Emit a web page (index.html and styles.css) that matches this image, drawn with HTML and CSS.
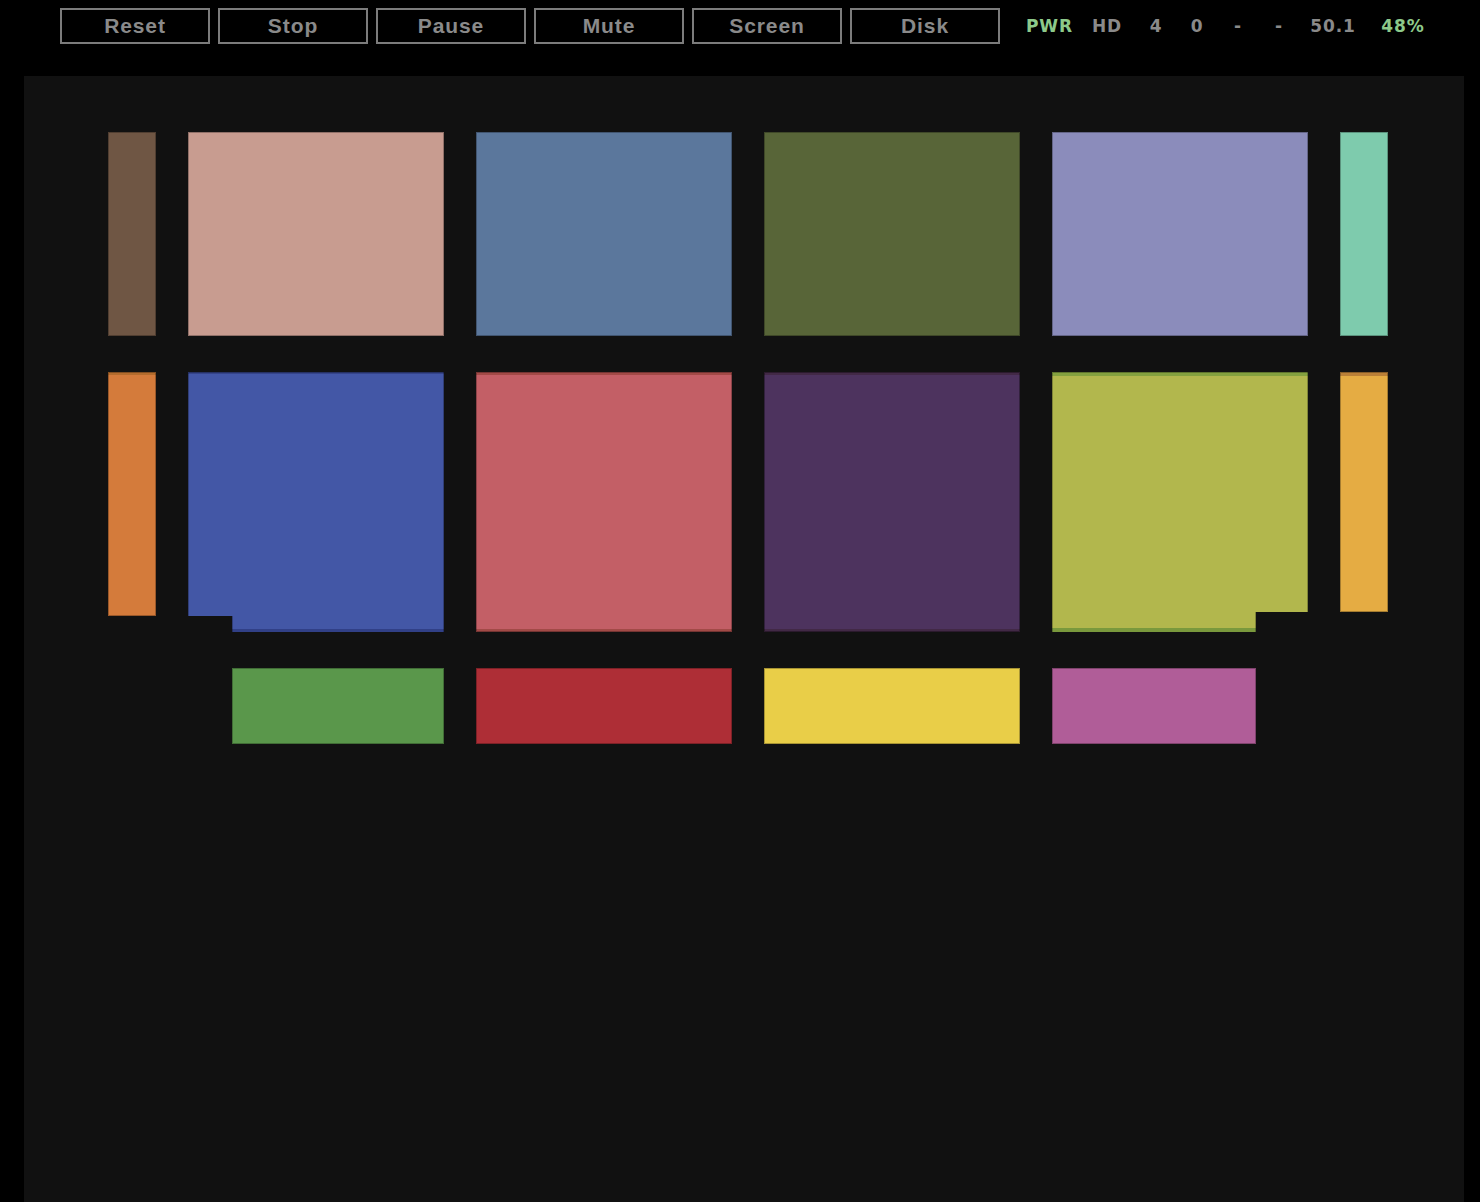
FILE: index.html
```html
<!DOCTYPE html>
<html lang="en">
<head>
<meta charset="utf-8">
<title>Console</title>
<link rel="stylesheet" href="styles.css">
</head>
<body>
<header class="topbar">
  <nav class="buttons">
    <button class="btn">Reset</button>
    <button class="btn">Stop</button>
    <button class="btn">Pause</button>
    <button class="btn">Mute</button>
    <button class="btn">Screen</button>
    <button class="btn">Disk</button>
  </nav>
  <div class="stats">
    <span class="stat w-pwr on">PWR</span>
    <span class="stat w-hd">HD</span>
    <span class="stat w-n1">4</span>
    <span class="stat w-n">0</span>
    <span class="stat w-n1">-</span>
    <span class="stat w-n">-</span>
    <span class="stat w-fps">50.1</span>
    <span class="stat w-pct on">48%</span>
  </div>
</header>
<main class="stage">
  <div class="keys">
    <div class="key brown"></div>
    <div class="key salmon"></div>
    <div class="key steel"></div>
    <div class="key olive"></div>
    <div class="key lavender"></div>
    <div class="key mint"></div>

    <div class="key orange tall-a"></div>
    <div class="lkey">
      <div class="key blue blue-top"></div>
      <div class="key blue blue-foot"></div>
    </div>
    <div class="key rose full striped-rose"></div>
    <div class="key purple full"></div>
    <div class="lkey">
      <div class="key lime lime-top"></div>
      <div class="key lime lime-foot"></div>
    </div>
    <div class="key amber tall-b"></div>

    <div class="slot"></div>
    <div class="slot"><div class="key green green-k"></div></div>
    <div class="key red"></div>
    <div class="key yellow"></div>
    <div class="slot"><div class="key magenta magenta-k"></div></div>
    <div class="slot"></div>
  </div>
</main>
</body>
</html>
```

FILE: styles.css
```css
html, body {
  margin: 0;
  padding: 0;
  background: #000;
  height: 100%;
}

body {
  display: flex;
  flex-direction: column;
  font-family: "Liberation Sans", Arial, sans-serif;
  overflow: hidden;
}

.topbar {
  display: flex;
  align-items: center;
  height: 36px;
  padding: 8px 0 0 60px;
  margin-bottom: 32px;
}

.buttons {
  display: flex;
  gap: 8px;
}

.btn {
  width: 150px;
  height: 36px;
  box-sizing: border-box;
  background: #000;
  border: 2px solid #7c7c7c;
  border-radius: 0;
  color: #8a8a8a;
  font-family: "Liberation Sans", Arial, sans-serif;
  font-weight: bold;
  font-size: 21px;
  letter-spacing: 0.9px;
  line-height: 30px;
  padding: 0;
  margin: 0;
}

.stats {
  display: flex;
  margin-left: 20px;
  font-family: "DejaVu Sans", Verdana, sans-serif;
  font-weight: bold;
  font-size: 17px;
  letter-spacing: 0.9px;
  color: #8a8a8a;
}

.stat { text-align: center; }
.stat.on { color: #8dc98a; }
.w-pwr { width: 59px; }
.w-hd { width: 56px; }
.w-n1 { width: 42px; }
.w-n { width: 40px; }
.w-fps { width: 68px; }
.w-pct { width: 72px; }

.stage {
  flex: 1;
  margin: 0 16px 0 24px;
  background: #111111;
}

.keys {
  display: grid;
  grid-template-columns: 48px repeat(4, 256px) 48px;
  grid-template-rows: 204px 260px 76px;
  column-gap: 32px;
  row-gap: 36px;
  padding: 56px 0 0 84px;
  align-items: start;
}

.key {
  box-sizing: border-box;
  box-shadow: inset 0 0 0 1px rgba(0, 0, 0, 0.28);
}

.keys > .key { height: 100%; }

.lkey {
  display: flex;
  flex-direction: column;
  height: 100%;
}

.brown { background: #6f5644; }
.salmon { background: #c89c90; }
.steel { background: #5b779c; }
.olive { background: #586538; }
.lavender { background: #8b8cbb; }
.mint { background: #7ecbad; }

.orange {
  background: #d47b3b;
  box-shadow: inset 0 0 0 1px rgba(0, 0, 0, 0.28), inset 0 3px 0 rgba(120, 80, 20, 0.35);
}
.keys > .tall-a { height: 244px; }

.blue { background: #4357a6; }
.blue-top {
  height: 244px;
  box-shadow: inset 1px 1px 0 rgba(0, 0, 0, 0.28), inset -1px 0 0 rgba(0, 0, 0, 0.28), inset 0 2px 0 rgba(40, 50, 110, 0.5);
}
.blue-foot {
  height: 16px;
  margin-left: 44px;
  box-shadow: inset 1px 0 0 rgba(0, 0, 0, 0.28), inset -1px 0 0 rgba(0, 0, 0, 0.28), inset 0 -3px 0 rgba(35, 45, 110, 0.55);
}

.rose { background: #c35f66; }
.striped-rose {
  box-shadow: inset 0 0 0 1px rgba(0, 0, 0, 0.28), inset 0 3px 0 rgba(140, 60, 50, 0.6), inset 0 -3px 0 rgba(140, 60, 50, 0.6);
}

.purple {
  background: #4d335e;
  box-shadow: inset 0 0 0 1px rgba(0, 0, 0, 0.35), inset 0 3px 0 rgba(60, 35, 55, 0.6), inset 0 -3px 0 rgba(60, 35, 55, 0.6);
}

.lime { background: #b2b74d; }
.lime-top {
  height: 240px;
  box-shadow: inset 1px 1px 0 rgba(0, 0, 0, 0.28), inset -1px 0 0 rgba(0, 0, 0, 0.28), inset 0 4px 0 rgba(120, 155, 60, 0.8);
}
.lime-foot {
  width: 204px;
  height: 20px;
  box-shadow: inset 1px 0 0 rgba(0, 0, 0, 0.28), inset -1px 0 0 rgba(0, 0, 0, 0.28), inset 0 -4px 0 rgba(115, 150, 60, 0.9);
}

.amber {
  background: #e5ac43;
  box-shadow: inset 0 0 0 1px rgba(0, 0, 0, 0.28), inset 0 4px 0 rgba(170, 110, 50, 0.7);
}
.keys > .tall-b { height: 240px; }

.slot { height: 100%; }
.green { background: #5a974b; }
.green-k { height: 100%; margin-left: 44px; }
.red { background: #ae2e36; }
.yellow { background: #e9ce48; }
.magenta { background: #b05d98; }
.magenta-k { height: 100%; width: 204px; }
```
